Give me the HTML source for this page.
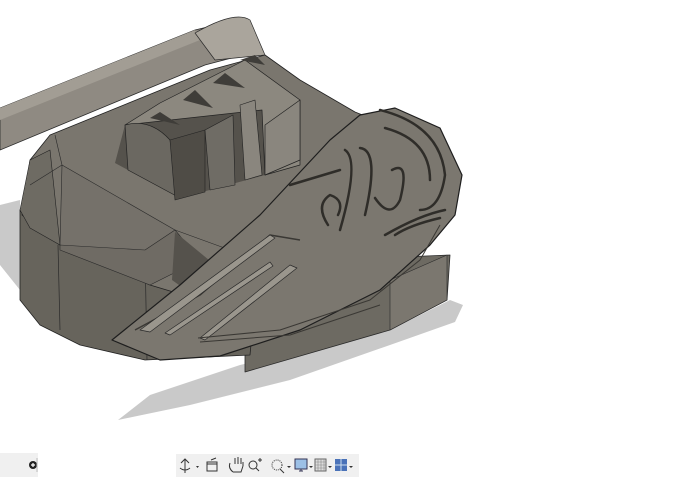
<!DOCTYPE html>
<html><head><style>
body{margin:0;width:677px;height:477px;background:#fff;overflow:hidden;position:relative;font-family:"Liberation Sans",sans-serif}
svg{position:absolute;left:0;top:0}
.tb{position:absolute;left:176px;top:454px;width:183px;height:23px;background:#f0f0f0}
.lb{position:absolute;left:0;top:453px;width:38px;height:24px;background:#f0f0f0}
</style></head><body>
<svg width="677" height="477" viewBox="0 0 677 477" stroke-linejoin="round">
<!-- shadows -->
<path d="M0 205 L20 200 L20 290 L0 265 Z" fill="#c9c9c9"/>
<path d="M118 420 L150 395 L240 365 L390 330 L450 300 L463 305 L455 322 L390 345 L290 380 L190 405 Z" fill="#c9c9c9"/>
<!-- base block right -->
<path d="M245 372 L390 330 L447 300 L450 255 L330 260 L245 300 Z" fill="#6d6a62" stroke="#2a2a2a" stroke-width="0.8"/>
<path d="M390 330 L390 280 L447 255 L447 300 Z" fill="#7b776f" stroke="#2a2a2a" stroke-width="0.6"/>
<!-- body sides -->
<path d="M20 210 L20 300 L40 325 L80 345 L145 360 L250 355 L260 250 L170 230 L60 245 L30 225 Z" fill="#67645c" stroke="#222" stroke-width="0.8"/>
<path d="M58 245 L60 330 M145 250 L147 360" stroke="#2a2a2a" stroke-width="0.7" fill="none"/>
<!-- body top (large, behind badge) -->
<path d="M22 215 L30 160 L50 135 L210 70 L265 55 L300 80 L355 112 L400 130 L350 220 L250 280 L200 300 L150 285 L60 245 L40 230 Z" fill="#7a766e" stroke="#222" stroke-width="0.8"/>
<path d="M20 210 L30 160 L50 150 L60 245 L30 228 Z" fill="#6e6b63" stroke="#222" stroke-width="0.6"/>
<path d="M60 245 L62 165 L175 230 L150 280 Z" fill="#75716a" stroke="#2a2a2a" stroke-width="0.6"/>
<path d="M62 165 L55 135 M62 165 L30 185 M175 230 L230 250" stroke="#2a2a2a" stroke-width="0.6" fill="none"/>
<path d="M60 245 L145 250 L175 230 L200 260 L150 285 L60 250 Z" fill="#6f6b64" stroke="#2a2a2a" stroke-width="0.6"/>
<path d="M175 232 L172 280 L200 300 L215 265 Z" fill="#55524c"/>
<!-- bar -->
<path d="M0 108 L195 30 L245 18 L262 50 L205 65 L0 150 Z" fill="#8f8a82" stroke="#2a2a2a" stroke-width="0.8"/>
<path d="M0 108 L195 30 L200 40 L0 120 Z" fill="#a29d94"/>
<path d="M195 33 Q235 10 250 20 L265 55 L215 60 Z" fill="#aaa59c" stroke="#2a2a2a" stroke-width="0.7"/>
<!-- raised block -->
<path d="M115 163 L180 198 L265 175 L270 120 L240 75 L160 105 L125 125 Z" fill="#55524c"/>
<path d="M125 125 L160 103 L245 60 L300 100 L300 165 L265 175 L262 110 Z" fill="#8c887f" stroke="#222" stroke-width="0.7"/>
<path d="M125 125 Q150 118 170 140 L180 198 L128 170 Z" fill="#6b6861" stroke="#222" stroke-width="0.7"/>
<path d="M170 140 L175 200 L205 192 L205 130 Z" fill="#4f4c46" stroke="#222" stroke-width="0.6"/>
<path d="M205 130 L210 190 L235 185 L233 115 Z" fill="#6f6c65" stroke="#222" stroke-width="0.6"/>
<path d="M240 105 L255 100 L262 175 L245 180 Z" fill="#8a867e" stroke="#222" stroke-width="0.6"/>
<path d="M265 125 L300 100 L300 160 L265 175 Z" fill="#8a867e" stroke="#222" stroke-width="0.7"/>
<path d="M150 118 L160 112 L180 125 Z M183 100 L195 90 L213 108 Z M213 83 L225 73 L245 88 Z M240 60 L255 55 L265 65 Z" fill="#3f3d39"/>
<!-- badge -->
<path d="M112 340 L180 285 L260 215 L330 140 L360 115 L395 108 L440 128 L462 175 L455 215 L430 245 L380 290 L300 330 L220 356 L160 360 Z" fill="#7b776f" stroke="#1e1e1e" stroke-width="1.2"/>
<path d="M135 330 L200 295 L270 235 L300 240" stroke="#3a3834" stroke-width="1.5" fill="none"/>
<path d="M140 330 L270 235 L275 238 L150 332 Z M165 333 L270 262 L273 266 L170 335 Z M200 338 L290 265 L297 268 L205 340 Z" fill="#9a968d" stroke="#2a2a2a" stroke-width="0.7"/>
<path d="M198 338 L280 330 L370 300 L420 260 L440 225 M200 342 L290 335 L380 305" stroke="#3a3834" stroke-width="1" fill="none"/>
<path d="M290 185 L340 170 M380 110 Q440 125 445 175 Q440 210 420 210 M385 128 Q430 140 430 180 M328 225 Q315 205 330 195 Q345 200 338 215 M345 150 Q360 160 340 230 M360 148 Q380 150 365 215 M392 170 Q410 160 400 200 Q390 220 375 198 M385 235 Q420 215 445 210 M395 235 Q410 225 440 218" stroke="#2f2d29" stroke-width="2.5" fill="none" stroke-linecap="round"/>
</svg>
<div class="lb"><svg width="38" height="24" style="position:absolute;left:0;top:0"><circle cx="33" cy="12" r="4" fill="#222"/><path d="M31 12h4M33 10v4" stroke="#fff" stroke-width="1.2"/><path d="M37 5v14" stroke="#bbb"/></svg></div>
<div class="tb"><svg width="183" height="23" style="position:absolute;left:0;top:0">
<g fill="none" stroke="#333" stroke-width="1">
<path d="M9 5v14M5 9l4-4 4 4M4 14q5 4 10 0"/>
<rect x="31" y="8" width="10" height="9"/><path d="M31 10h10M35 6l5-2"/>
<path d="M57 18q-5-4-3-9M59 10v-6M62 10v-7M65 10v-6M67 12v-4M57 18h8l2-6"/>
<circle cx="77" cy="11" r="4"/><path d="M80 14l3 3M84 4v4M82 6h4"/>
<circle cx="101" cy="11" r="5" stroke-dasharray="1 1"/><path d="M104 15l4 4"/>
</g>
<path d="M20 12l3 0-1.5 2z M111 12l4 0-2 2z M133 12l4 0-2 2z M152 12l4 0-2 2z M173 12l4 0-2 2z" fill="#333"/>
<rect x="119" y="5" width="12" height="10" fill="#9cc0e6" stroke="#335"/><path d="M123 17h4M125 15v2" stroke="#335"/>
<rect x="139" y="5" width="11" height="12" fill="#ddd" stroke="#666"/><path d="M142 5v12M145 5v12M148 5v12M139 8h11M139 11h11M139 14h11" stroke="#888" stroke-width=".6"/>
<rect x="159" y="5" width="12" height="12" fill="#4a72b8"/><path d="M165 5v12M159 11h12" stroke="#cde"/>
</svg></div>
</body></html>
